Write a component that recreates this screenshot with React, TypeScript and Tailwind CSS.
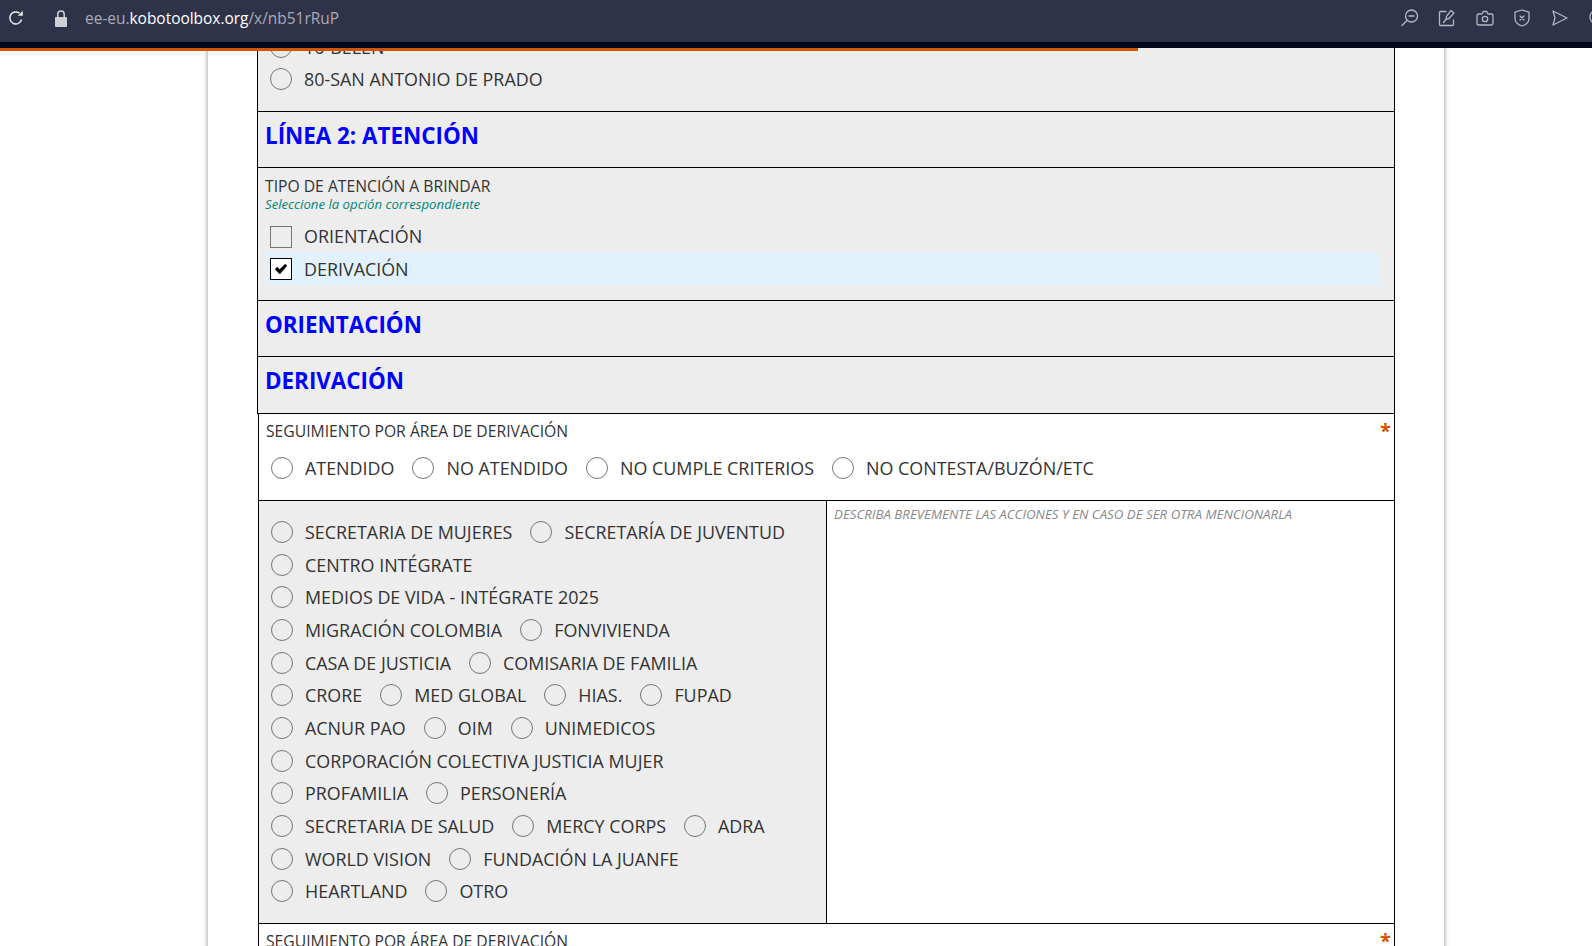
type TOption = { label: string };

const FONT = "font-['Open_Sans',sans-serif]";

const top_options = ['ATENDIDO', 'NO ATENDIDO', 'NO CUMPLE CRITERIOS', 'NO CONTESTA/BUZÓN/ETC'];

const area_rows: string[][] = [
  ['SECRETARIA DE MUJERES', 'SECRETARÍA DE JUVENTUD'],
  ['CENTRO INTÉGRATE'],
  ['MEDIOS DE VIDA - INTÉGRATE 2025'],
  ['MIGRACIÓN COLOMBIA', 'FONVIVIENDA'],
  ['CASA DE JUSTICIA', 'COMISARIA DE FAMILIA'],
  ['CRORE', 'MED GLOBAL', 'HIAS.', 'FUPAD'],
  ['ACNUR PAO', 'OIM', 'UNIMEDICOS'],
  ['CORPORACIÓN COLECTIVA JUSTICIA MUJER'],
  ['PROFAMILIA', 'PERSONERÍA'],
  ['SECRETARIA DE SALUD', 'MERCY CORPS', 'ADRA'],
  ['WORLD VISION', 'FUNDACIÓN LA JUANFE'],
  ['HEARTLAND', 'OTRO'],
];

const Radio = ({ label }: TOption) => (
  <label className="flex items-center pl-[5px] pr-[13px]">
    <span className="size-[22px] shrink-0 rounded-full border border-[#767676] bg-transparent" />
    <span className="ml-[12px] text-[17.9px] leading-[22px] text-[#333]">{label}</span>
  </label>
);

const Heading = ({ text, height }: { text: string; height: string }) => (
  <div className={`${height} border-x border-b border-black bg-[#ededed] pl-[7px] pt-[9px] text-[22.4px] leading-[30px] font-bold text-[#0000ff]`}>
    {text}
  </div>
);

const BrowserBar = () => (
  <div className="flex h-[42px] shrink-0 items-center bg-[#2f334a] pb-[6px]">
    <svg viewBox="0 0 16 16" className="ml-[8px] size-[16px] text-[#e8e8ea]" fill="none" stroke="currentColor" strokeWidth="1.5">
      <path d="M13.600 9.500A6 6 0 1 1 11.500 3.200" />
      <path d="M9.800 5.800h5V.8z" fill="currentColor" stroke="none" />
    </svg>
    <svg viewBox="0 0 12 17" className="ml-[31px] h-[17px] w-[12px] text-[#cfd0d6]" fill="currentColor">
      <rect x="0" y="7" width="12" height="10" rx="1" />
      <path d="M2.800 7.500V4.200a3.200 3.200 0 0 1 6.400 0v3.300" fill="none" stroke="currentColor" strokeWidth="1.500" />
    </svg>
    <div className="mt-[1px] ml-[18px] text-[15.45px] text-[#a9abb6]">
      ee-eu.<span className="font-medium text-white">kobotoolbox.org</span>/x/nb51rRuP
    </div>
    <div className="mr-[-14px] ml-auto flex items-center gap-[19.5px] text-[#b4b6c0]">
      <svg viewBox="0 0 18 18" className="size-[18px]" fill="none" stroke="currentColor" strokeWidth="1.300" strokeLinecap="round">
        <circle cx="10.500" cy="7" r="6" />
        <path d="M8 7h5M6 11.500l-5 5" />
      </svg>
      <svg viewBox="0 0 18 18" className="size-[18px]" fill="none" stroke="currentColor" strokeWidth="1.300" strokeLinecap="round" strokeLinejoin="round">
        <path d="M8 2.500H2.500a1 1 0 0 0-1 1v12a1 1 0 0 0 1 1h12a1 1 0 0 0 1-1V11" />
        <path d="M13 1.500l3 2.500-5 5.500-3 .8.500-3z" />
        <path d="M5.500 13.500l2.500-3" />
      </svg>
      <svg viewBox="0 0 18 18" className="size-[18px]" fill="none" stroke="currentColor" strokeWidth="1.300" strokeLinejoin="round">
        <path d="M2.500 5H6l1.200-2.500h3.600L12 5h3.500a1.500 1.500 0 0 1 1.500 1.500v8a1.500 1.500 0 0 1-1.500 1.500h-13A1.500 1.500 0 0 1 1 14.500v-8A1.500 1.500 0 0 1 2.500 5z" />
        <circle cx="9" cy="10" r="2.700" />
      </svg>
      <svg viewBox="0 0 18 18" className="size-[18px]" fill="none" stroke="currentColor" strokeWidth="1.300" strokeLinecap="round" strokeLinejoin="round">
        <path d="M9 1l7 2.200v6c0 3.800-3 6.500-7 7.800-4-1.300-7-4-7-7.800v-6z" />
        <path d="M7 7l4 4M11 7l-4 4" />
      </svg>
      <svg viewBox="0 0 18 18" className="size-[18px]" fill="none" stroke="currentColor" strokeWidth="1.300" strokeLinejoin="round">
        <path d="M2 2l14 7-14 7 2-7z" />
      </svg>
      <svg viewBox="0 0 18 18" className="size-[18px]" fill="none" stroke="currentColor" strokeWidth="1.300">
        <circle cx="9" cy="8" r="7" />
      </svg>
    </div>
  </div>
);

export default function App() {
  return (
    <div className={`relative flex h-[946px] w-[1592px] flex-col overflow-hidden bg-white ${FONT}`}>
      <BrowserBar />
      <div className="h-[6px] shrink-0 bg-[#05081a]" />
      <div className="absolute top-[48px] left-0 z-10 h-[3px] w-[1138px] bg-[#d35400]" />

      <main className="min-h-0 flex-1 overflow-hidden">
        <div className="ml-[208px] w-[1236px] bg-white px-[49px] shadow-[0_0_5px_rgba(0,0,0,0.45)]">
          {/* grupo anterior, cortado por el scroll */}
          <div className="-mt-[17px] h-[81px] border-x border-b border-black bg-[#ededed] pl-[12px]">
            <div className="flex h-[32px] items-center">
              <span className="size-[22px] rounded-full border border-[#767676]" />
              <span className="ml-[12px] text-[17.9px] text-[#333]">16-BELEN</span>
            </div>
            <div className="flex h-[32px] items-center">
              <span className="size-[22px] rounded-full border border-[#767676]" />
              <span className="ml-[12px] text-[17.9px] text-[#333]">80-SAN ANTONIO DE PRADO</span>
            </div>
          </div>

          <Heading text="LÍNEA 2: ATENCIÓN" height="h-[56px]" />

          <div className="h-[133px] border-x border-b border-black bg-[#ededed] pl-[7px] pr-[15px] pt-[8px]">
            <div className="text-[15.7px] leading-[20px] text-[#333]">TIPO DE ATENCIÓN A BRINDAR</div>
            <div className="text-[13.2px] leading-[16px] text-[#00857c] italic">Seleccione la opción correspondiente</div>
            <div className="mt-[8px] flex h-[33px] items-center pl-[5px]">
              <span className="size-[22px] border border-[#767676]" />
              <span className="ml-[12px] text-[17.9px] text-[#333]">ORIENTACIÓN</span>
            </div>
            <div className="flex h-[32px] items-center bg-[#e2f2fc] pl-[5px]">
              <span className="flex size-[22px] items-center justify-center border border-black bg-white">
                <svg viewBox="0 0 12 10" className="h-[10px] w-[12px]">
                  <path d="M0 5.200L2.200 3 4.600 5.400 10.200 0 12 1.800 4.800 10z" fill="#000" stroke="#000" strokeWidth="0.400" />
                </svg>
              </span>
              <span className="ml-[12px] text-[17.9px] text-[#333]">DERIVACIÓN</span>
            </div>
          </div>

          <Heading text="ORIENTACIÓN" height="h-[56px]" />
          <Heading text="DERIVACIÓN" height="h-[57px]" />

          <div className="relative ml-px h-[87px] border-x border-b border-black bg-white pl-[7px] pt-[7px]">
            <span className="absolute top-[2px] right-[3px] text-[20px] font-bold text-[#d35400]">*</span>
            <div className="text-[15.7px] leading-[20px] text-[#333]">SEGUIMIENTO POR ÁREA DE DERIVACIÓN</div>
            <div className="mt-[16px] flex">
              {top_options.map((option) => (
                <Radio key={option} label={option} />
              ))}
            </div>
          </div>

          <div className="ml-px flex h-[423px] border-x border-b border-black">
            <div className="w-[568px] shrink-0 border-r border-black bg-[#ededed] pl-[7px] pt-[14.7px]">
              {area_rows.map((row) => (
                <div key={row[0]} className="flex h-[32.67px] items-center">
                  {row.map((item) => (
                    <Radio key={item} label={item} />
                  ))}
                </div>
              ))}
            </div>
            <div className="flex-1 bg-white pl-[7px] pt-[5px] text-[13.3px] leading-[16px] text-[#888] italic">
              DESCRIBA BREVEMENTE LAS ACCIONES Y EN CASO DE SER OTRA MENCIONARLA
            </div>
          </div>

          <div className="relative ml-px h-[80px] border-x border-black bg-white pl-[7px] pt-[7px]">
            <span className="absolute top-[2px] right-[3px] text-[20px] font-bold text-[#d35400]">*</span>
            <div className="text-[15.7px] leading-[20px] text-[#333]">SEGUIMIENTO POR ÁREA DE DERIVACIÓN</div>
          </div>
        </div>
      </main>
    </div>
  );
}
